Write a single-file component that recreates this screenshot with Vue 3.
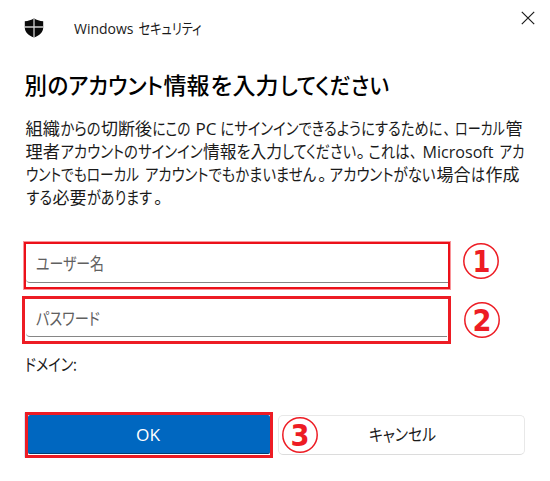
<script setup>
import { ref } from 'vue'

const username = ref('')
const password = ref('')

// each run: text, start x, width
const titleRuns = [
    ['別', 0.5, 22.5],
    ['のアカウント', 23.5, 115.5],
    ['情報', 139.5, 46],
    ['を', 186.5, 21.5],
    ['入力', 208.5, 46],
    ['してください', 256, 109],
]

const messageLines = [
    [
        ['組織', 0.5, 34.5],
        ['からの', 35.5, 40],
        ['切断後', 76, 51],
        ['にこの', 127.5, 38],
        ['PC', 170.5, 21, true],
        ['にサインインできるようにするために', 195.5, 222],
        ['、', 418.5, 6.5],
        ['ローカル', 430, 50],
        ['管', 480.5, 17],
    ],
    [
        ['理者', 0.5, 34.5],
        ['アカウントのサインイン', 35.5, 142],
        ['情報', 178, 33.5],
        ['を', 211.5, 14],
        ['入力', 225.5, 31.5],
        ['してください', 257, 74],
        ['。', 331.5, 8.5],
        ['これは', 343.5, 41],
        ['、', 385, 6.5],
        ['Microsoft', 397.5, 71, true],
        ['アカ', 474.5, 25],
    ],
    [
        ['ウントでもローカル', 1, 113],
        ['アカウントでもかまいません', 120, 171],
        ['。', 293, 8.5],
        ['アカウントがない', 304.5, 106],
        ['場合', 411.5, 34],
        ['は', 446, 14],
        ['作成', 460.5, 34],
    ],
    [
        ['する', 1.5, 25.5],
        ['必要', 27.5, 34],
        ['があります', 62, 65],
        ['。', 129, 8.5],
    ],
]
</script>

<template>
    <div class="dialog">
        <header class="header">
            <svg class="shield" width="20" height="20" viewBox="0 0 20 20">
                <path d="M10 .3C12.400 2 15.800 3.100 19.200 3.200V9.500C19.200 14.200 15.500 17.500 10 19.500C4.500 17.500.8 14.200.8 9.500V3.200C4.200 3.100 7.600 2 10 .3Z" fill="#0a0a0a" />
                <path d="M10 0V20M.5 9H19.500" stroke="#d0d0d0" stroke-width="1.300" />
            </svg>
            <svg class="app-name" width="130" height="24">
                <text class="latin" x="0" y="17.500" textLength="59.500" lengthAdjust="spacingAndGlyphs">Windows</text>
                <text x="64.500" y="17.500" textLength="63" lengthAdjust="spacingAndGlyphs">セキュリティ</text>
            </svg>
            <button class="close" aria-label="閉じる">
                <svg width="14" height="14" viewBox="0 0 14 14">
                    <path d="M.8 .8L13.200 13.200M13.200 .8L.8 13.200" stroke="#1b1b1b" stroke-width="1.200" />
                </svg>
            </button>
        </header>

        <h1 class="title">
            <svg width="370" height="32">
                <text v-for="[text, x, w] in titleRuns" :key="x" :x="x" y="25" :textLength="w" lengthAdjust="spacingAndGlyphs">{{ text }}</text>
            </svg>
        </h1>

        <div class="message">
            <svg v-for="(line, i) in messageLines" :key="i" width="502" height="23">
                <text
                    v-for="[text, x, w, latin] in line"
                    :key="x"
                    :class="{ latin }"
                    :x="x"
                    y="17"
                    :textLength="w"
                    lengthAdjust="spacingAndGlyphs"
                >{{ text }}</text>
            </svg>
        </div>

        <div class="row row-user">
            <label class="frame frame-user">
                <input v-model="username" class="field" type="text">
                <svg v-if="!username" class="hint" width="80" height="24">
                    <text x="0" y="18" textLength="68" lengthAdjust="spacingAndGlyphs">ユーザー名</text>
                </svg>
            </label>
            <svg class="step" width="38" height="38">
                <circle cx="19" cy="19" r="17.200" />
                <text x="10.500" y="30" textLength="18" lengthAdjust="spacingAndGlyphs">1</text>
            </svg>
        </div>

        <div class="row row-password">
            <label class="frame frame-password">
                <input v-model="password" class="field" type="password">
                <svg v-if="!password" class="hint" width="80" height="24">
                    <text x="0" y="18" textLength="64" lengthAdjust="spacingAndGlyphs">パスワード</text>
                </svg>
            </label>
            <svg class="step" width="38" height="38">
                <circle cx="19" cy="19" r="17.200" />
                <text x="9.500" y="29.500" textLength="19" lengthAdjust="spacingAndGlyphs">2</text>
            </svg>
        </div>

        <svg class="domain" width="60" height="24">
            <text x="0" y="18" textLength="52" lengthAdjust="spacingAndGlyphs">ドメイン:</text>
        </svg>

        <footer class="actions">
            <div class="ok-frame">
                <button class="ok">
                    <svg width="24" height="24">
                        <text class="latin" x="0" y="18" textLength="24" lengthAdjust="spacingAndGlyphs">OK</text>
                    </svg>
                </button>
            </div>
            <button class="cancel">
                <svg width="67" height="24">
                    <text x="0" y="18" textLength="67" lengthAdjust="spacingAndGlyphs">キャンセル</text>
                </svg>
                <svg class="step step-over" width="38" height="38">
                    <circle cx="19" cy="19" r="17.200" />
                    <text x="9.500" y="30" textLength="19" lengthAdjust="spacingAndGlyphs">3</text>
                </svg>
            </button>
        </footer>
    </div>
</template>

<style>
body {
    margin: 0;
    background: #fff;
}
</style>

<style scoped>
.dialog {
    box-sizing: border-box;
    width: 550px;
    height: 481px;
    overflow: hidden;
    background: #fff;
    color: #1a1a1a;
    font-family: "Noto Sans CJK JP", sans-serif;
    font-size: 17px;
    font-feature-settings: "palt";
}

svg {
    display: block;
    flex: none;
    overflow: visible;
}

text {
    fill: currentColor;
}

.latin {
    font-family: "Open Sans", "Noto Sans", sans-serif;
}

button {
    font: inherit;
    color: inherit;
    padding: 0;
    border: none;
    background: none;
}

.header {
    display: flex;
    height: 69px;
    padding-left: 24px;
}

.shield {
    margin-top: 18px;
}

.app-name {
    margin: 16px 0 0 30px;
    font-size: 15px;
}

.close {
    align-self: flex-start;
    margin: 11px 15px 0 auto;
}

.title {
    height: 32px;
    margin: 0 0 17px 24px;
    font-size: 22.5px;
    font-weight: 500;
    color: #000;
}

.message {
    height: 123px;
    margin-left: 25px;
}

.row {
    display: flex;
}

.row-user {
    height: 55px;
    padding-left: 23px;
}

.row-password {
    height: 57px;
    padding-left: 22px;
}

.frame {
    position: relative;
    box-sizing: border-box;
    display: block;
}

.frame-user {
    width: 428px;
    height: 49px;
    padding: 2px 2px 6px;
    border: 1px solid #f9959a;
    background: #fff;
    box-shadow: inset 0 0 0 2px #ec1019;
}

.frame-password {
    width: 429px;
    height: 48px;
    padding: 0 1px 4px;
    border: 3px solid #ed1c24;
}

.field {
    box-sizing: border-box;
    display: block;
    width: 100%;
    height: 100%;
    padding: 0 10px;
    border: none;
    border-bottom: 1px solid #868686;
    border-radius: 0 0 0 4px;
    outline: none;
    background: transparent;
    font: inherit;
}

.frame-user .field {
    height: 39px;
}

.frame-password .field {
    height: 38px;
}

.hint {
    position: absolute;
    left: 12px;
    top: 10px;
    color: #606060;
    pointer-events: none;
}

.frame-password .hint {
    left: 11px;
    top: 8px;
}

.step {
    font-family: "DejaVu Sans", sans-serif;
    font-size: 31px;
    font-weight: bold;
    color: #ed1c24;
}

.step circle {
    fill: none;
    stroke: currentColor;
    stroke-width: 1.5;
}

.row-user .step {
    margin: 1px 0 0 11px;
}

.row-password .step {
    margin: 5px 0 0 12px;
}

.domain {
    margin-left: 25px;
}

.actions {
    display: flex;
    margin-top: 35px;
    padding-left: 25px;
}

.ok-frame {
    box-sizing: border-box;
    width: 248px;
    height: 46px;
    padding-bottom: 1px;
    border: 3px solid #ed1c24;
    box-shadow: -1px 0 0 -0.5px #a6cdec;
}

.ok {
    box-sizing: border-box;
    display: flex;
    width: 100%;
    height: 39px;
    padding: 8px 0 0 108px;
    border-bottom: 1px solid #003e73;
    border-radius: 2px;
    background: #0067c0;
    color: #fff;
}

.ok svg {
    height: 30px;
}

.cancel {
    position: relative;
    box-sizing: border-box;
    display: flex;
    width: 247px;
    height: 40px;
    margin: 3px 0 0 5px;
    padding: 7px 0 0 90px;
    border: 1px solid #e8e8e8;
    border-bottom-color: #dcdcdc;
    border-radius: 5px;
}

.step-over {
    position: absolute;
    left: 2px;
    top: 0;
}
</style>
